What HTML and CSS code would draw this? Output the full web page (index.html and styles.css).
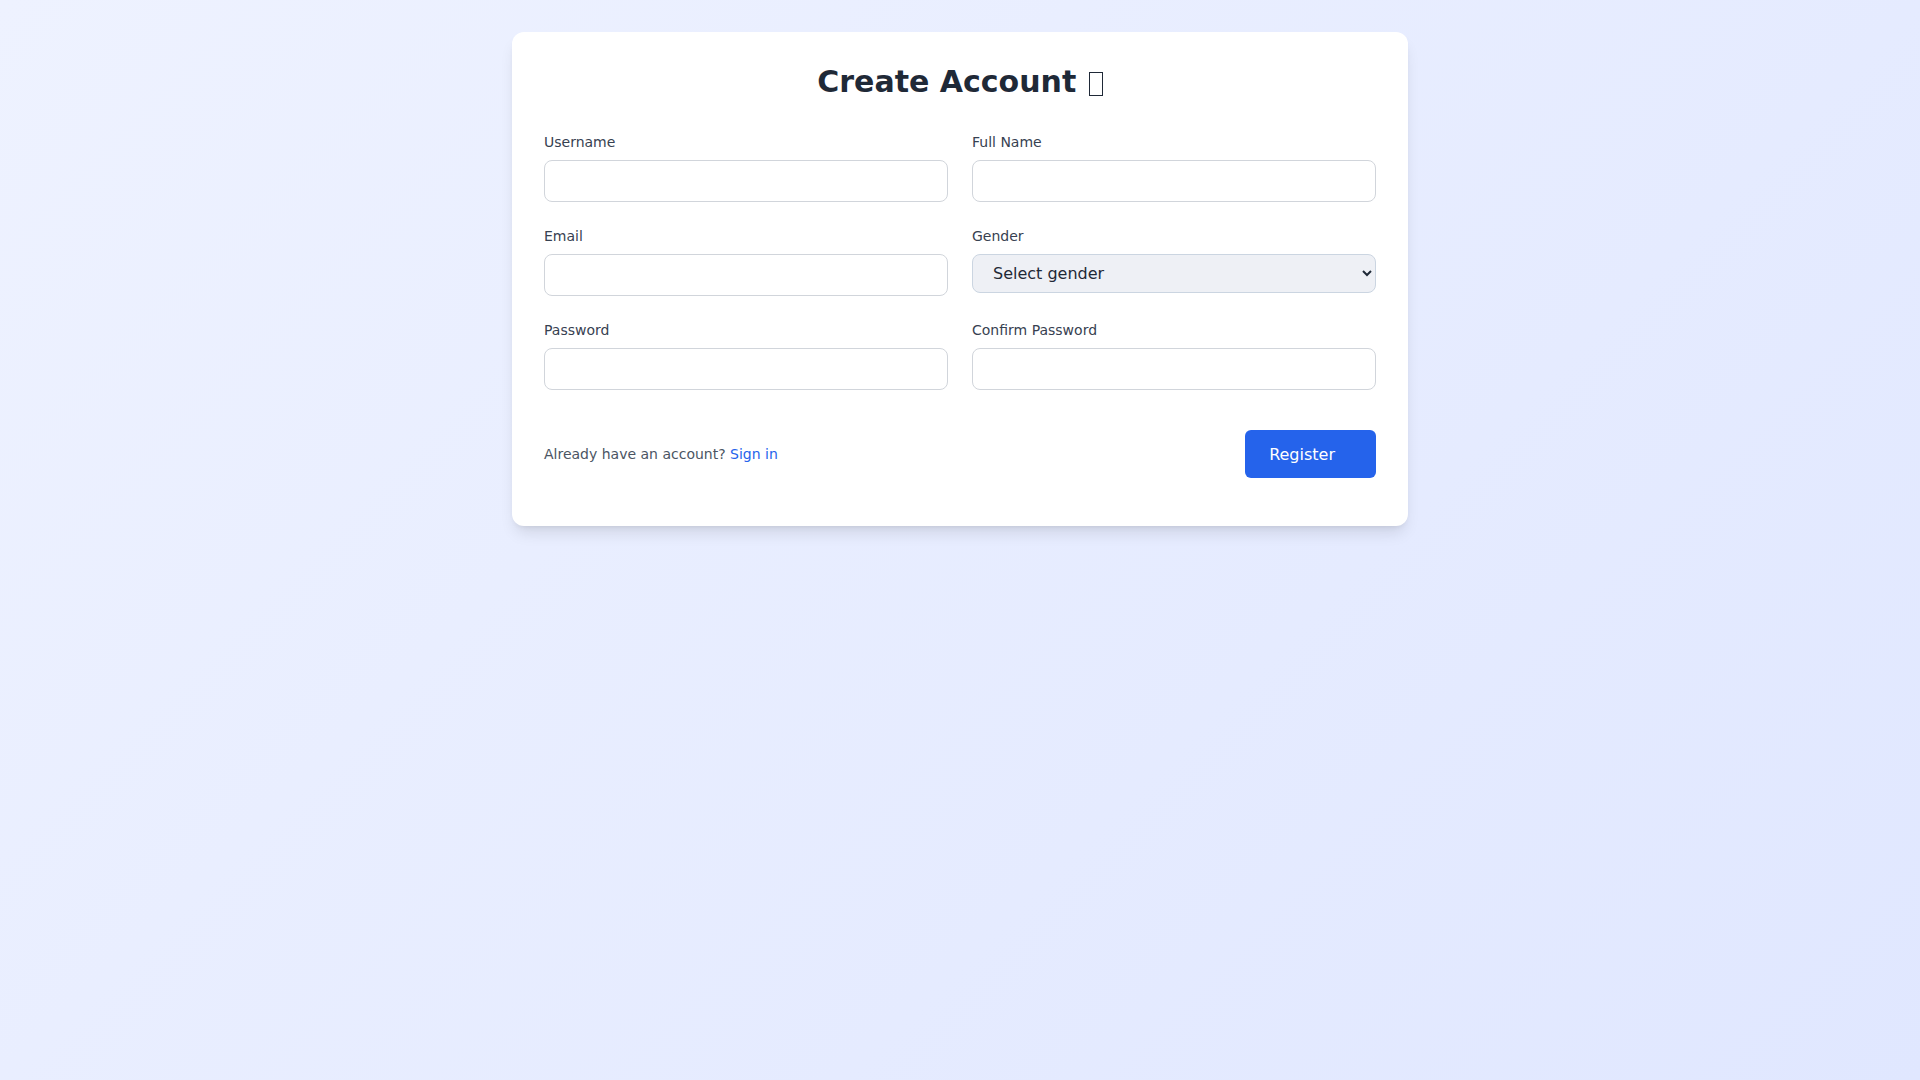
FILE: index.html
```html
<!DOCTYPE html>
<html lang="en">
<head>
    <meta charset="UTF-8">
    <meta name="viewport" content="width=device-width, initial-scale=1.0">
    <title>Create Account</title>
    <link rel="stylesheet" href="styles.css">
</head>
<body>

    <div class="card">
        <h1>Create Account <span class="missing-glyph"></span></h1>

        <form class="form-grid">
            <div class="field">
                <label for="username">Username</label>
                <input type="text" id="username">
            </div>
            <div class="field">
                <label for="fullname">Full Name</label>
                <input type="text" id="fullname">
            </div>
            <div class="field">
                <label for="email">Email</label>
                <input type="email" id="email">
            </div>
            <div class="field">
                <label for="gender">Gender</label>
                <select id="gender">
                    <option>Select gender</option>
                    <option>Male</option>
                    <option>Female</option>
                    <option>Other</option>
                </select>
            </div>
            <div class="field">
                <label for="password">Password</label>
                <input type="password" id="password">
            </div>
            <div class="field">
                <label for="confirm">Confirm Password</label>
                <input type="password" id="confirm">
            </div>
        </form>

        <div class="footer-row">
            <p class="signin">Already have an account? <a href="#">Sign in</a></p>
            <button type="button" class="register-btn">Register</button>
        </div>
    </div>

</body>
</html>
```

FILE: styles.css
```css
body {
    font-family: 'DejaVu Sans', sans-serif;
    margin: 0;
    min-height: 100vh;
    padding: 32px 0;
    box-sizing: border-box;
    background: linear-gradient(135deg, #eef2ff 0%, #e0e7ff 100%);
    color: #374151;
}

.card {
    width: 896px;
    margin: 0 auto;
    background: #ffffff;
    border-radius: 12px;
    padding: 32px 32px 48px;
    box-sizing: border-box;
    box-shadow: 0 10px 15px -3px rgba(0, 0, 0, 0.1), 0 4px 6px -4px rgba(0, 0, 0, 0.1);
}

h1 {
    margin: 0 0 32px;
    text-align: center;
    font-size: 30px;
    line-height: 36px;
    font-weight: 700;
    color: #1f2937;
}

/* box drawn where the emoji has no glyph */
.missing-glyph {
    display: inline-block;
    width: 12px;
    height: 22px;
    border: 1.5px solid #1f2937;
    vertical-align: -4px;
    margin-left: 2px;
}

.form-grid {
    display: grid;
    grid-template-columns: 1fr 1fr;
    column-gap: 24px;
    row-gap: 24px;
}

.field label {
    display: block;
    font-size: 14px;
    line-height: 20px;
    margin-bottom: 8px;
    color: #374151;
}

.field input {
    display: block;
    width: 100%;
    box-sizing: border-box;
    height: 42px;
    padding: 8px 12px;
    border: 1px solid #d1d5db;
    border-radius: 8px;
    font-size: 16px;
    font-family: inherit;
    background: #fff;
}

.field select {
    display: block;
    width: 100%;
    box-sizing: border-box;
    height: 39px;
    padding: 0 16px;
    border: 1px solid #cbd5e1;
    border-radius: 8px;
    font-size: 16px;
    font-family: inherit;
    color: #1f2937;
    background-color: #eef0f5;
}

.footer-row {
    display: flex;
    align-items: center;
    justify-content: space-between;
    margin-top: 40px;
}

.signin {
    margin: 0;
    font-size: 14px;
    line-height: 20px;
    color: #4b5563;
}

.signin a {
    color: #2563eb;
    text-decoration: none;
}

.register-btn {
    background-color: #2563eb;
    color: #ffffff;
    border: none;
    border-radius: 6px;
    height: 48px;
    padding: 0 41px 0 24px;
    font-size: 16px;
    font-family: inherit;
    cursor: pointer;
}
```
